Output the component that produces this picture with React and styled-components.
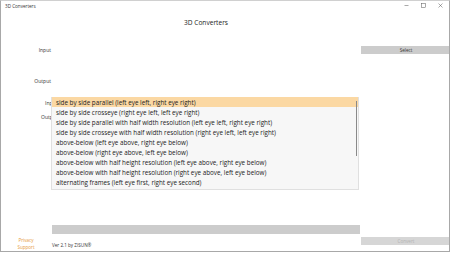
import React, { useState } from 'react';
import styled, { createGlobalStyle } from 'styled-components';

const GlobalStyle = createGlobalStyle`
  html, body {
    margin: 0;
    padding: 0;
    background: #ffffff;
  }
  body {
    font-family: "Segoe UI", "Open Sans", "Liberation Sans", sans-serif;
    color: #222;
  }
`;

const Window = styled.div`
  width: 450px;
  height: 252px;
  box-sizing: border-box;
  border: 1px solid #a8a8a8;
  border-top: 1px solid #d0d0d0;
  background: #fff;
  display: flex;
  flex-direction: column;
  overflow: hidden;
`;

const TitleBar = styled.div`
  height: 9px;
  display: flex;
  align-items: center;
  justify-content: space-between;
  padding: 0 0 0 4px;
`;

const TitleText = styled.span`
  font-size: 4.6px;
  color: #333;
`;

const Controls = styled.div`
  display: flex;
  align-items: center;
`;

const ControlButton = styled.div`
  width: 17px;
  height: 9px;
  display: flex;
  align-items: center;
  justify-content: center;
`;

const Heading = styled.h1`
  margin: 8px 0 0;
  height: 10px;
  font-size: 6.6px;
  font-weight: 400;
  text-align: center;
  color: #222;
  line-height: 10px;
  padding-right: 38px;
`;

const Body = styled.div`
  flex: 1;
  display: grid;
  grid-template-columns: 50px 308px 89px;
  column-gap: 1px;
  position: relative;
`;

const Row = styled.div`
  grid-column: 1 / -1;
  display: grid;
  grid-template-columns: subgrid;
  height: ${p => p.$h}px;
  margin-top: ${p => p.$mt || 0}px;
  align-items: center;
`;

const Label = styled.div`
  font-size: 5px;
  color: #333;
  white-space: nowrap;
  justify-self: ${p => (p.$right ? 'end' : 'start')};
  padding-left: ${p => p.$pl || 0}px;
`;

const GrayButton = styled.div`
  height: 8px;
  background: ${p => (p.$disabled ? '#d6d6d6' : '#cccccc')};
  color: ${p => (p.$disabled ? '#b4b4b4' : '#333')};
  font-size: 4.6px;
  display: flex;
  align-items: center;
  justify-content: center;
  margin-right: -1px;
  align-self: ${p => (p.$top ? 'start' : 'center')};
`;

const MainCell = styled.div`
  height: 100%;
`;

const Progress = styled.div`
  height: 9px;
  background: #cccccc;
`;

const Links = styled.div`
  display: flex;
  flex-direction: column;
  align-items: center;
  width: 50px;
  margin-top: -1px;
`;

const LinkText = styled.span`
  font-size: 4.6px;
  color: #e69a3c;
  line-height: 7px;
`;

const Version = styled.div`
  font-size: 4.6px;
  color: #333;
  padding-top: 1px;
`;

const Dropdown = styled.div`
  position: absolute;
  left: 50px;
  top: 69px;
  width: 308px;
  height: 93px;
  box-sizing: border-box;
  background: #f7f7f7;
  border: 1px solid #e0e0e0;
  border-top: none;
  z-index: 5;
`;

const Option = styled.div`
  height: 10.1px;
  display: flex;
  align-items: center;
  padding-left: 4px;
  font-size: 6.3px;
  color: #222;
  background: ${p => (p.$active ? '#fbd8a3' : 'transparent')};
  white-space: nowrap;
`;

const ScrollThumb = styled.div`
  position: absolute;
  right: 1px;
  top: 4px;
  width: 1px;
  height: 55px;
  background: #8a8a8a;
`;

const options = [
  'side by side parallel (left eye left, right eye right)',
  'side by side crosseye (right eye left, left eye right)',
  'side by side parallel with half width resolution (left eye left, right eye right)',
  'side by side crosseye with half width resolution (right eye left, left eye right)',
  'above-below (left eye above, right eye below)',
  'above-below (right eye above, left eye below)',
  'above-below with half height resolution (left eye above, right eye below)',
  'above-below with half height resolution (right eye above, left eye below)',
  'alternating frames (left eye first, right eye second)',
];

export default function App() {
  const [selected, setSelected] = useState(0);

  return (
    <>
      <GlobalStyle />
      <Window>
        <TitleBar>
          <TitleText>3D Converters</TitleText>
          <Controls>
            <ControlButton>
              <svg width="5" height="5" viewBox="0 0 10 10">
                <path d="M1 5h8" stroke="#555" strokeWidth="1" />
              </svg>
            </ControlButton>
            <ControlButton>
              <svg width="5" height="5" viewBox="0 0 10 10">
                <rect x="1" y="1" width="8" height="8" fill="none" stroke="#555" strokeWidth="1" />
              </svg>
            </ControlButton>
            <ControlButton>
              <svg width="5" height="5" viewBox="0 0 10 10">
                <path d="M1 1l8 8M9 1l-8 8" stroke="#555" strokeWidth="1" />
              </svg>
            </ControlButton>
          </Controls>
        </TitleBar>
        <Heading>3D Converters</Heading>
        <Body>
          <Row $h={8} $mt={18}>
            <Label $right>Input</Label>
            <MainCell />
            <GrayButton>Select</GrayButton>
          </Row>
          <Row $h={8} $mt={23}>
            <Label $right>Output</Label>
            <MainCell />
            <div />
          </Row>
          <Row $h={8} $mt={14}>
            <Label $pl={44}>Input format</Label>
            <MainCell />
            <div />
          </Row>
          <Row $h={8} $mt={6}>
            <Label $pl={40}>Output format</Label>
            <MainCell />
            <div />
          </Row>
          <Row $h={9} $mt={104}>
            <div />
            <Progress />
            <div />
          </Row>
          <Row $h={14} $mt={3}>
            <Links>
              <LinkText>Privacy</LinkText>
              <LinkText>Support</LinkText>
            </Links>
            <Version>Ver 2.1 by ZISUN®</Version>
            <GrayButton $disabled $top>Convert</GrayButton>
          </Row>
          <Dropdown>
            {options.map((o, i) => (
              <Option key={o} $active={i === selected} onClick={() => setSelected(i)}>
                {o}
              </Option>
            ))}
            <ScrollThumb />
          </Dropdown>
        </Body>
      </Window>
    </>
  );
}
